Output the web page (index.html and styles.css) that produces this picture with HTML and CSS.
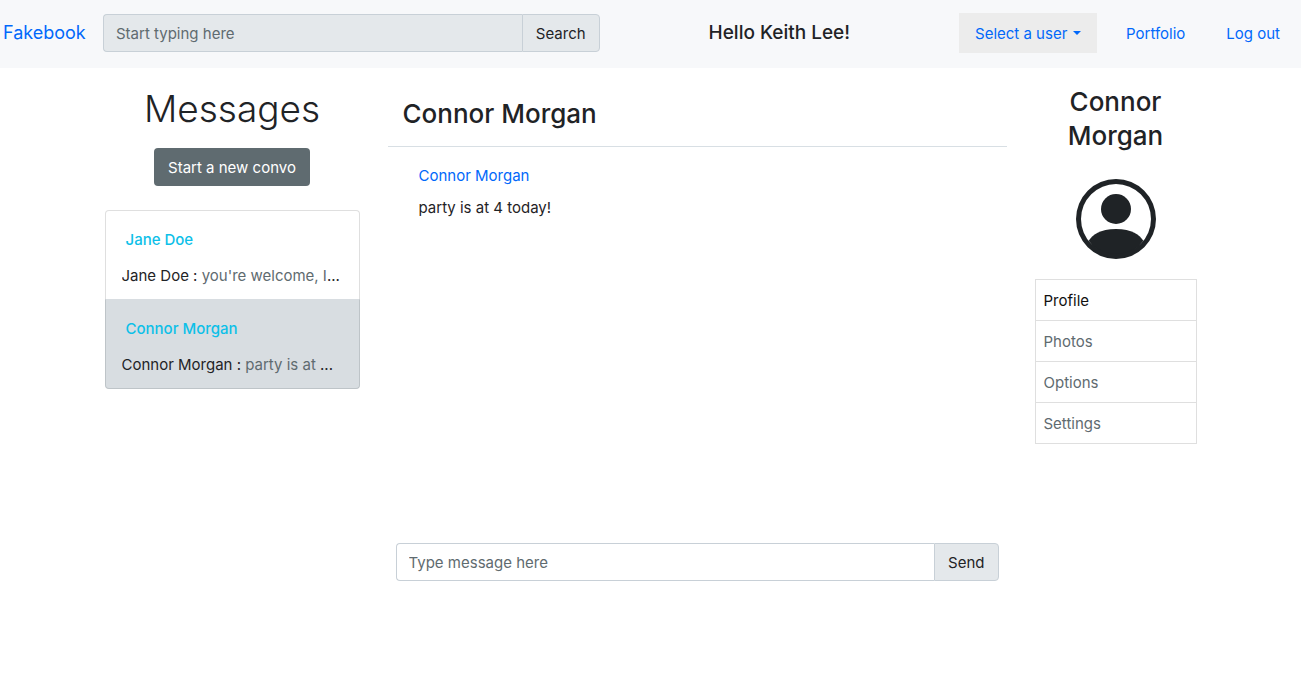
FILE: index.html
```html
<!DOCTYPE html>
<html lang="en">
<head>
<meta charset="utf-8">
<meta name="viewport" content="width=device-width, initial-scale=1">
<title>Fakebook</title>
<link rel="stylesheet" href="styles.css">
</head>
<body>
<header class="navbar">
  <a class="brand" href="#">Fakebook</a>
  <form class="input-group search">
    <input class="field" type="text" placeholder="Start typing here" aria-label="Search text">
    <button class="addon" type="button">Search</button>
  </form>
  <h1 class="greeting">Hello Keith Lee!</h1>
  <nav class="nav-links">
    <div class="user-picker">
      <select class="user-select" aria-label="Select a user"><option>Select a user</option></select>
      <svg class="caret" viewBox="0 0 8 4" aria-hidden="true"><path d="M0 0h8L4 4z"/></svg>
    </div>
    <a class="nav-link" href="#">Portfolio</a>
    <a class="nav-link" href="#">Log out</a>
  </nav>
</header>
<main class="layout">
  <section class="inbox">
    <h2 class="inbox-title">Messages</h2>
    <button class="new-convo" type="button">Start a new convo</button>
    <ul class="convo-list">
      <li class="convo">
        <a class="convo-name" href="#">Jane Doe</a>
        <p class="preview">Jane Doe : <span class="muted">you're welcome, I</span>...</p>
      </li>
      <li class="convo active">
        <a class="convo-name" href="#">Connor Morgan</a>
        <p class="preview">Connor Morgan : <span class="muted">party is at </span>...</p>
      </li>
    </ul>
  </section>
  <section class="chat">
    <h2 class="chat-title">Connor Morgan</h2>
    <div class="thread">
      <a class="sender" href="#">Connor Morgan</a>
      <p class="message">party is at 4 today!</p>
    </div>
    <form class="input-group composer">
      <input class="field" type="text" placeholder="Type message here" aria-label="Message">
      <button class="addon" type="button">Send</button>
    </form>
  </section>
  <aside class="profile">
    <h2 class="profile-name">Connor Morgan</h2>
    <svg class="avatar" viewBox="0 0 16 16" role="img" aria-label="Profile picture">
      <path d="M13.468 12.37C12.758 11.226 11.195 10 8 10s-4.757 1.225-5.468 2.37A7.2 7.2 0 0 0 8 15.5a7.2 7.2 0 0 0 5.468-3.13z"/>
      <circle cx="8" cy="6" r="3"/>
      <path fill-rule="evenodd" d="M8 1a7 7 0 1 0 0 14A7 7 0 0 0 8 1zM0 8a8 8 0 1 1 16 0A8 8 0 0 1 0 8z"/>
    </svg>
    <table class="menu">
      <tbody>
        <tr><td class="current">Profile</td></tr>
        <tr><td>Photos</td></tr>
        <tr><td>Options</td></tr>
        <tr><td>Settings</td></tr>
      </tbody>
    </table>
  </aside>
</main>
</body>
</html>
```
FILE: styles.css
```css
* { box-sizing: border-box; }

body {
  margin: 0;
  min-height: 100vh;
  display: flex;
  flex-direction: column;
  background: #fff;
  color: #1f2326;
  font-family: Inter, "Liberation Sans", sans-serif;
  font-size: 15px;
  line-height: 24px;
}

h1, h2, p, ul { margin: 0; padding: 0; font-weight: 500; }
p { font-weight: 400; }
ul { list-style: none; }
a { color: #0168fa; text-decoration: none; }
input, button, select { font: inherit; color: inherit; margin: 0; }

.navbar {
  display: grid;
  grid-template-columns: 100px minmax(200px, 496fr) minmax(160px, 359fr) auto;
  align-items: center;
  min-height: 68px;
  padding: 0 21px 2px 3px;
  background: #f7f8fa;
}
.brand { font-size: 18px; }
.greeting { font-size: 19px; text-align: center; }

.input-group { display: flex; }
.field {
  flex: 1;
  min-width: 0;
  height: 38px;
  padding: 6px 12px;
  border: 1px solid #c8d0d7;
  border-right: 0;
  border-radius: 4px 0 0 4px;
  background: #fff;
}
.field::placeholder { color: #5f6b70; opacity: 1; }
.search .field { background: #e4e8eb; }
.addon {
  height: 38px;
  padding: 1px 13px 0;
  border: 1px solid #c8d0d7;
  border-radius: 0 4px 4px 0;
  background: #e4e8eb;
}

.nav-links { display: flex; align-items: center; }
.nav-link { padding-top: 2px; margin-left: 41px; }
.user-picker { position: relative; margin-right: -12px; }
.user-select {
  appearance: none;
  display: block;
  width: 138px;
  height: 40px;
  padding: 1px 16px 0;
  border: 0;
  border-radius: 0;
  background: #ececec;
  color: #0168fa;
}
.caret {
  position: absolute;
  right: 16px;
  top: 18px;
  width: 8px;
  height: 4px;
  fill: #0168fa;
  pointer-events: none;
}

.layout {
  flex: 1;
  display: grid;
  grid-template-columns: 255fr 619fr 162fr;
  gap: 28px;
  width: 84%;
  max-width: 1092px;
  margin: 0 auto;
}

.inbox { padding-top: 17px; text-align: center; }
.inbox-title { font-size: 37px; font-weight: 300; line-height: 48px; }
.new-convo {
  height: 38px;
  margin: 15px 0 24px;
  padding: 1px 14px 0;
  border: 0;
  border-radius: 4px;
  background: #5f6b70;
  color: #fff;
}
.convo-list { text-align: left; }
.convo { padding: 17px 16px 11px; border: 1px solid #dfdfdf; }
.convo:first-child { border-bottom: 0; border-radius: 4px 4px 0 0; }
.convo.active { background: #d8dde1; border-color: #d8dde1 #bec4c8 #bec4c8; border-radius: 0 0 4px 4px; }
.convo-name { display: block; padding-left: 4px; color: #0dc0e8; }
.preview { margin-top: 12px; white-space: nowrap; overflow: hidden; text-overflow: ellipsis; }
.muted { color: #5f6b70; }

.chat { display: flex; flex-direction: column; padding-bottom: 97px; }
.chat-title {
  padding: 29px 15px 15px;
  border-bottom: 1px solid #d8dfe4;
  font-size: 26px;
  line-height: 34px;
}
.thread { flex: 1; padding: 17px 31px; }
.sender { display: block; }
.message { margin-top: 8px; }
.composer { padding: 0 8px; }

.profile { padding-top: 17px; text-align: center; }
.profile-name { padding: 0 24px; font-size: 26px; line-height: 34px; }
.avatar { display: block; width: 80px; height: 80px; margin: 26px auto 20px; fill: #1f2326; }
.menu { width: 100%; border-collapse: collapse; text-align: left; }
.menu td { padding: 9px 8px 7px; border: 1px solid #dfdfdf; color: #5f6b70; }
.menu .current { color: #111; }
```
